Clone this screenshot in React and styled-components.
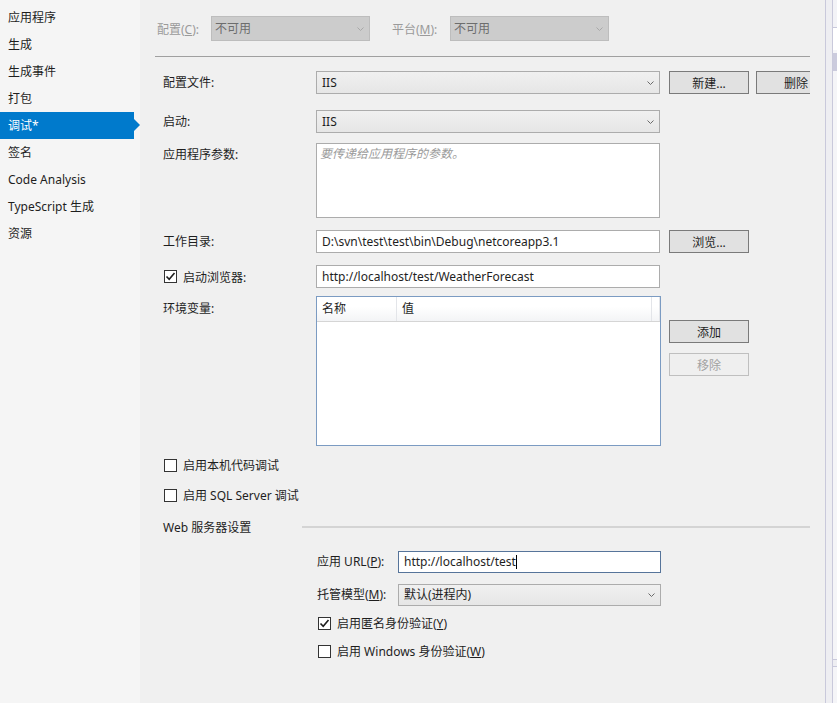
import React from "react";
import styled, { createGlobalStyle } from "styled-components";

const Global = createGlobalStyle`
  html, body { margin: 0; padding: 0; background: #f0f0f0; overflow: hidden; }
  body {
    font-family: "Segoe UI", "Noto Sans", "Noto Sans CJK SC", sans-serif;
    font-size: 12px;
    color: #1e1e1e;
  }
  * { box-sizing: border-box; }
`;

const Page = styled.div`
  display: grid;
  grid-template-columns: 140px 685px 12px;
  width: 837px;
  height: 703px;
`;

/* ---------- sidebar ---------- */
const Sidebar = styled.nav`
  background: #f5f5f5;
  padding-top: 4px;
  display: flex;
  flex-direction: column;
`;

const NavItem = styled.div`
  position: relative;
  height: 27px;
  line-height: 27px;
  padding-left: 8px;
  width: 134px;
  white-space: nowrap;
  background: ${(p) => (p.$active ? "#007acc" : "transparent")};
  color: ${(p) => (p.$active ? "#ffffff" : "#1e1e1e")};
  &::after {
    content: "";
    display: ${(p) => (p.$active ? "block" : "none")};
    position: absolute;
    right: -6px;
    top: 7px;
    border-top: 6.5px solid transparent;
    border-bottom: 6.5px solid transparent;
    border-left: 6px solid #007acc;
  }
`;

/* ---------- main ---------- */
const Main = styled.main`
  padding: 16px 15px 0 15px;
  overflow: hidden;
`;

const Clip = styled.div`
  width: 655px;
  overflow: hidden;
`;

const TopBar = styled.div`
  display: flex;
  align-items: center;
  height: 25px;
  padding-left: 2px;
`;

const TopLabel = styled.span`
  width: ${(p) => p.$w}px;
  margin-left: ${(p) => p.$ml || 0}px;
  color: #9a9a9a;
  white-space: nowrap;
  u { text-decoration: underline; }
`;

const Separator = styled.div`
  height: 1px;
  background: #a0a0a0;
  margin-top: 15px;
`;

const Row = styled.div`
  display: flex;
  align-items: flex-start;
  margin-top: ${(p) => p.$mt}px;
  padding-left: ${(p) => p.$pl ?? 8}px;
`;

const Label = styled.label`
  width: ${(p) => p.$w ?? 153}px;
  flex: none;
  line-height: ${(p) => p.$lh ?? 23}px;
  padding-top: ${(p) => p.$pt ?? 0}px;
  white-space: nowrap;
  u { text-decoration: underline; }
`;

const Combo = styled.div`
  position: relative;
  flex: none;
  width: ${(p) => p.$w}px;
  height: ${(p) => p.$h ?? 23}px;
  line-height: ${(p) => (p.$h ?? 23) - 2}px;
  padding-left: ${(p) => (p.$disabled ? 3 : 5)}px;
  border: 1px solid ${(p) => (p.$disabled ? "#bdbdbd" : "#acacac")};
  background: ${(p) =>
    p.$disabled ? "#cccccc" : "linear-gradient(#f0f0f0, #e6e6e6)"};
  color: ${(p) => (p.$disabled ? "#6d6d6d" : "#1e1e1e")};
  white-space: nowrap;
`;

const Chevron = styled.svg`
  position: absolute;
  right: 5px;
  top: 50%;
  margin-top: -2px;
`;

const ChevronIcon = ({ color = "#6a6a6a" }) => (
  <Chevron width="7" height="4" viewBox="0 0 7 4">
    <path d="M0.5 0.5 L3.5 3.5 L6.5 0.5" fill="none" stroke={color} strokeWidth="1" />
  </Chevron>
);

const TextBox = styled.div`
  flex: none;
  width: ${(p) => p.$w ?? 344}px;
  height: ${(p) => p.$h ?? 23}px;
  line-height: ${(p) => (p.$h ?? 23) - 2}px;
  padding-left: 5px;
  background: #ffffff;
  border: 1px solid ${(p) => (p.$focus ? "#56749a" : "#acacac")};
  white-space: nowrap;
  overflow: hidden;
`;

const TextArea = styled.div`
  flex: none;
  width: 344px;
  height: 75px;
  background: #fff;
  border: 1px solid #acacac;
  padding: 2px 3px;
  line-height: 16px;
`;

const Placeholder = styled.span`
  color: #9a9a9a;
  font-style: italic;
`;

const Caret = styled.span`
  display: inline-block;
  width: 1px;
  height: 14px;
  background: #000;
  vertical-align: -3px;
`;

const Button = styled.button`
  flex: none;
  width: 80px;
  height: 23px;
  margin-left: ${(p) => p.$ml ?? 9}px;
  margin-top: ${(p) => p.$mt ?? 0}px;
  padding: 0;
  font: inherit;
  background: ${(p) => (p.$disabled ? "#efefef" : "#e1e1e1")};
  border: 1px solid ${(p) => (p.$disabled ? "#bfbfbf" : "#7a7a7a")};
  color: ${(p) => (p.$disabled ? "#a2a2a2" : "#1e1e1e")};
`;

const ButtonCol = styled.div`
  display: flex;
  flex-direction: column;
  padding-top: 24px;
`;

const CheckRow = styled.div`
  display: flex;
  align-items: center;
  height: 15px;
  line-height: 15px;
  margin-top: ${(p) => p.$mt}px;
  padding-left: ${(p) => p.$pl ?? 9}px;
  white-space: nowrap;
  u { text-decoration: underline; }
`;

const Box = styled.span`
  flex: none;
  width: 13px;
  height: 13px;
  border: 1px solid #333333;
  background: #ffffff;
  margin-right: ${(p) => p.$mr ?? 6}px;
  display: flex;
  align-items: center;
  justify-content: center;
`;

const Check = ({ checked, mr }) => (
  <Box $mr={mr}>
    {checked && (
      <svg width="11" height="11" viewBox="0 0 11 11">
        <path d="M1.5 5.5 L4.2 8.3 L9.5 2" fill="none" stroke="#1e1e1e" strokeWidth="1.6" />
      </svg>
    )}
  </Box>
);

const BrowserLabel = styled.div`
  width: 153px;
  flex: none;
  height: 23px;
  display: flex;
  align-items: center;
  padding-left: 1px;
`;

const ListView = styled.div`
  flex: none;
  width: 345px;
  height: 150px;
  border: 1px solid #7b9bc2;
  background: #fff;
`;

const ListHeader = styled.div`
  display: grid;
  grid-template-columns: 80px 255px 1fr;
  height: 25px;
  background: linear-gradient(#ffffff 40%, #f3f4f6);
  border-bottom: 1px solid #d5d5d5;
`;

const HeaderCell = styled.div`
  padding-left: 5px;
  line-height: 24px;
  border-right: 1px solid #e3e5e9;
`;

const SectionHead = styled.div`
  display: flex;
  align-items: center;
  height: 16px;
  margin-top: 16px;
  padding-left: 8px;
`;

const SectionTitle = styled.span`
  width: 139px;
  flex: none;
  white-space: nowrap;
`;

const SectionLine = styled.div`
  flex: 1;
  height: 2px;
  background: #d4d4d4;
`;

/* ---------- right dock ---------- */
const Dock = styled.aside`
  display: grid;
  grid-template-columns: 6px 5px;
  border-left: 1px solid #c9c9db;
  background: #eeeef2;
`;

const DockGap = styled.div``;

const DockPanel = styled.div`
  border-left: 1px solid #c9c9db;
  background: #f5f5f8;
  display: flex;
  flex-direction: column;
`;

const DockBlock = styled.div`
  flex: none;
  height: ${(p) => p.$h}px;
  margin-top: ${(p) => p.$mt ?? 0}px;
  background: ${(p) => p.$bg};
  border-top: ${(p) => (p.$line ? "1px solid #c9c9db" : "none")};
`;

export default function App() {
  const nav = ["应用程序", "生成", "生成事件", "打包", "调试*", "签名", "Code Analysis", "TypeScript 生成", "资源"];
  return (
    <>
      <Global />
      <Page>
        <Sidebar>
          {nav.map((n) => (
            <NavItem key={n} $active={n === "调试*"}>
              {n}
            </NavItem>
          ))}
        </Sidebar>

        <Main>
          <Clip>
            <TopBar>
              <TopLabel $w={54}>
                配置(<u>C</u>):
              </TopLabel>
              <Combo $w={159} $h={25} $disabled>
                不可用
                <ChevronIcon color="#a8a8a8" />
              </Combo>
              <TopLabel $w={58} $ml={22}>
                平台(<u>M</u>):
              </TopLabel>
              <Combo $w={159} $h={25} $disabled>
                不可用
                <ChevronIcon color="#a8a8a8" />
              </Combo>
            </TopBar>
            <Separator />

            <Row $mt={14}>
              <Label>配置文件:</Label>
              <Combo $w={344}>
                IIS
                <ChevronIcon />
              </Combo>
              <Button>新建...</Button>
              <Button $ml={7}>删除</Button>
            </Row>

            <Row $mt={16}>
              <Label>启动:</Label>
              <Combo $w={344}>
                IIS
                <ChevronIcon />
              </Combo>
            </Row>

            <Row $mt={10}>
              <Label>应用程序参数:</Label>
              <TextArea>
                <Placeholder>要传递给应用程序的参数。</Placeholder>
              </TextArea>
            </Row>

            <Row $mt={12}>
              <Label>工作目录:</Label>
              <TextBox>D:\svn\test\test\bin\Debug\netcoreapp3.1</TextBox>
              <Button>浏览...</Button>
            </Row>

            <Row $mt={12}>
              <BrowserLabel>
                <Check checked />
                启动浏览器:
              </BrowserLabel>
              <TextBox>http://localhost/test/WeatherForecast</TextBox>
            </Row>

            <Row $mt={8}>
              <Label $pt={1}>环境变量:</Label>
              <ListView>
                <ListHeader>
                  <HeaderCell>名称</HeaderCell>
                  <HeaderCell>值</HeaderCell>
                  <HeaderCell />
                </ListHeader>
              </ListView>
              <ButtonCol>
                <Button $ml={8}>添加</Button>
                <Button $ml={8} $mt={10} $disabled>
                  移除
                </Button>
              </ButtonCol>
            </Row>

            <CheckRow $mt={12}>
              <Check />
              启用本机代码调试
            </CheckRow>
            <CheckRow $mt={15}>
              <Check />
              启用 SQL Server 调试
            </CheckRow>

            <SectionHead>
              <SectionTitle>Web 服务器设置</SectionTitle>
              <SectionLine />
            </SectionHead>

            <Row $mt={16} $pl={162}>
              <Label $w={81} $lh={22}>
                应用 URL(<u>P</u>):
              </Label>
              <TextBox $w={263} $h={22} $focus>
                http://localhost/test
                <Caret />
              </TextBox>
            </Row>

            <Row $mt={11} $pl={162}>
              <Label $w={81} $lh={22}>
                托管模型(<u>M</u>):
              </Label>
              <Combo $w={263} $h={22}>
                默认(进程内)
                <ChevronIcon />
              </Combo>
            </Row>

            <CheckRow $mt={10} $pl={163}>
              <Check checked />
              启用匿名身份验证(<u>Y</u>)
            </CheckRow>
            <CheckRow $mt={13} $pl={163}>
              <Check />
              启用 Windows 身份验证(<u>W</u>)
            </CheckRow>
          </Clip>
        </Main>

        <Dock>
          <DockGap />
          <DockPanel>
            <DockBlock $h={27} $bg="#f3f3f7" />
            <DockBlock $h={23} $bg="#ffffff" $line />
            <DockBlock $h={18} $mt={3} $bg="#cbcbdd" />
            <DockBlock $h={588} $bg="#f5f5f8" />
            <DockBlock $h={7} $bg="#eeeef2" $line />
            <DockBlock $h={40} $bg="#f5f5f8" $line />
          </DockPanel>
        </Dock>
      </Page>
    </>
  );
}
